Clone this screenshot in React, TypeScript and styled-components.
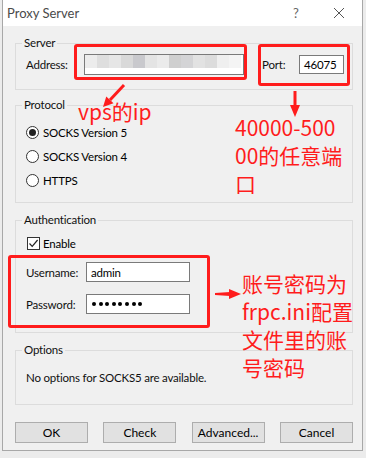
import React from 'react';
import styled, { createGlobalStyle } from 'styled-components';

const uiFont = 'Lato, "Noto Sans", Arial, sans-serif';
const red = '#ff1c1c';

const GlobalStyle = createGlobalStyle`
  html, body {
    margin: 0;
    padding: 0;
  }
  body {
    background: #e9e9e9;
    font-family: ${uiFont};
    font-size: 11.5px;
    letter-spacing: -0.2px;
    color: #000;
  }
`;

const Page = styled.div`
  position: relative;
  width: 366px;
  height: 458px;
  overflow: hidden;
  padding-left: 2px;
  box-sizing: border-box;
  background: #ececec;
`;

const Window = styled.div`
  width: 361px;
  height: 451px;
  box-sizing: border-box;
  border: 1px solid #a8a8a8;
  border-top: none;
  background: #f0f0f0;
  display: flex;
  flex-direction: column;
`;

const TitleBar = styled.div`
  height: 26px;
  flex-shrink: 0;
  background: #fff;
  display: flex;
  align-items: center;
  padding-left: 4px;
  color: #4a4a4a;
  font-size: 13px;
  letter-spacing: 0;
`;

const Title = styled.span`
  flex: 1;
`;

const HelpGlyph = styled.span`
  width: 14px;
  margin-right: 30px;
  color: #666;
  font-size: 13px;
  text-align: center;
`;

const CloseIcon = styled.svg`
  width: 12px;
  height: 12px;
  margin-right: 17px;
`;

const Body = styled.div`
  flex: 1;
  padding: 9px 9px 0 12px;
  display: flex;
  flex-direction: column;
`;

const Group = styled.fieldset<{ $top: number; $bottom: number; $gap?: number }>`
  margin: 0 0 ${({ $gap }) => $gap ?? 0}px;
  padding: ${({ $top }) => $top}px 0 ${({ $bottom }) => $bottom}px 10px;
  border: 1px solid #dcdcdc;
  min-width: 0;
`;

const Legend = styled.legend`
  padding: 0 2px;
  margin-left: -4px;
  line-height: 16px;
  color: #111;
`;

const Row = styled.div<{ $mt?: number }>`
  display: flex;
  align-items: center;
  margin-top: ${({ $mt }) => $mt ?? 0}px;
`;

const Label = styled.span<{ $w: number; $ml?: number }>`
  width: ${({ $w }) => $w}px;
  margin-left: ${({ $ml }) => $ml ?? 0}px;
  flex-shrink: 0;
  color: #111;
`;

const TextBox = styled.div<{ $w: number; $h: number }>`
  width: ${({ $w }) => $w}px;
  height: ${({ $h }) => $h}px;
  box-sizing: border-box;
  border: 1px solid #7a7a7a;
  background: #fff;
  display: flex;
  align-items: center;
  padding-left: 4px;
  overflow: hidden;
`;

const Mosaic = styled.div`
  display: flex;
  align-self: stretch;
  margin: 0 0 6px -4px;
`;

const Cell = styled.span<{ $c: string }>`
  width: 12px;
  background: ${({ $c }) => $c};
`;

const RadioRow = styled.label`
  display: flex;
  align-items: center;
  height: 18px;
  & + & {
    margin-top: 6px;
  }
`;

const Radio = styled.span<{ $on?: boolean }>`
  width: 11px;
  height: 11px;
  border: 1px solid #333;
  border-radius: 50%;
  background: #fff;
  margin-right: 4px;
  display: flex;
  align-items: center;
  justify-content: center;
  &::after {
    content: '';
    display: ${({ $on }) => ($on ? 'block' : 'none')};
    width: 7px;
    height: 7px;
    border-radius: 50%;
    background: #222;
  }
`;

const CheckBox = styled.span`
  width: 11px;
  height: 11px;
  border: 1px solid #333;
  background: #fff;
  margin: 0 3px 0 1px;
  display: flex;
`;

const Dots = styled.div`
  display: flex;
  gap: 2.6px;
  padding-left: 1px;
`;

const Dot = styled.span`
  width: 4px;
  height: 4px;
  border-radius: 50%;
  background: #000;
`;

const Note = styled.div`
  line-height: 16px;
  color: #111;
`;

const Buttons = styled.div`
  display: flex;
  justify-content: space-between;
  margin-top: 17px;
`;

const Button = styled.button`
  width: 73px;
  height: 21px;
  box-sizing: border-box;
  border: 1px solid #adadad;
  background: #e1e1e1;
  font-family: ${uiFont};
  font-size: 12px;
  color: #000;
  padding: 0;
`;

const RedBox = styled.div<{ $x: number; $y: number; $w: number; $h: number }>`
  position: absolute;
  left: ${({ $x }) => $x}px;
  top: ${({ $y }) => $y}px;
  width: ${({ $w }) => $w}px;
  height: ${({ $h }) => $h}px;
  box-sizing: border-box;
  border: 3px solid ${red};
  border-radius: 3px;
  pointer-events: none;
`;

const RedNote = styled.div<{ $x: number; $y: number; $lh?: number }>`
  position: absolute;
  left: ${({ $x }) => $x}px;
  top: ${({ $y }) => $y}px;
  font-family: "Noto Sans CJK SC", "Noto Sans", sans-serif;
  font-size: 21px;
  letter-spacing: 0;
  line-height: ${({ $lh }) => $lh ?? 28}px;
  color: ${red};
  white-space: nowrap;
`;

const ArrowLayer = styled.svg`
  position: absolute;
  left: 0;
  top: 0;
  pointer-events: none;
`;

const mosaic = ['#ececec', '#dedede', '#e6e6e6', '#d9d9d9', '#c9c9cd', '#e4e4e4', '#ebebeb', '#cfcfcf', '#d4d4d6', '#e2e2e2', '#dcdcdc', '#efefef', '#f4f4f4'];

export default function App() {
  return (
    <>
      <GlobalStyle />
      <Page>
        <Window>
          <TitleBar>
            <Title>Proxy Server</Title>
            <HelpGlyph>?</HelpGlyph>
            <CloseIcon viewBox="0 0 12 12">
              <path d="M1 1 L11 11 M11 1 L1 11" stroke="#555" strokeWidth="1" />
            </CloseIcon>
          </TitleBar>
          <Body>
            <Group $top={3} $bottom={14} $gap={7}>
              <Legend>Server</Legend>
              <Row>
                <Label $w={58}>Address:</Label>
                <TextBox $w={160} $h={21}>
                  <Mosaic>
                    {mosaic.map((c, i) => (
                      <Cell key={i} $c={c} />
                    ))}
                  </Mosaic>
                </TextBox>
                <Label $w={37} $ml={18}>Port:</Label>
                <TextBox $w={45} $h={19}>46075</TextBox>
              </Row>
            </Group>

            <Group $top={10} $bottom={13} $gap={9}>
              <Legend>Protocol</Legend>
              <RadioRow>
                <Radio $on />
                SOCKS Version 5
              </RadioRow>
              <RadioRow>
                <Radio />
                SOCKS Version 4
              </RadioRow>
              <RadioRow>
                <Radio />
                HTTPS
              </RadioRow>
            </Group>

            <Group $top={6} $bottom={18} $gap={9}>
              <Legend>Authentication</Legend>
              <RadioRow>
                <CheckBox>
                  <svg width="11" height="11" viewBox="0 0 11 11">
                    <path d="M1.5 5.5 L4.2 8.3 L9.6 2" fill="none" stroke="#222" strokeWidth="1.2" />
                  </svg>
                </CheckBox>
                Enable
              </RadioRow>
              <Row $mt={10}>
                <Label $w={60}>Username:</Label>
                <TextBox $w={104} $h={20}>admin</TextBox>
              </Row>
              <Row $mt={12}>
                <Label $w={60}>Password:</Label>
                <TextBox $w={104} $h={20}>
                  <Dots>
                    {Array.from({ length: 8 }).map((_, i) => (
                      <Dot key={i} />
                    ))}
                  </Dots>
                </TextBox>
              </Row>
            </Group>

            <Group $top={12} $bottom={18}>
              <Legend>Options</Legend>
              <Note>No options for SOCKS5 are available.</Note>
            </Group>

            <Buttons>
              <Button>OK</Button>
              <Button>Check</Button>
              <Button>Advanced...</Button>
              <Button>Cancel</Button>
            </Buttons>
          </Body>
        </Window>

        <RedBox $x={74} $y={44} $w={173} $h={36} />
        <RedBox $x={258} $y={44} $w={92} $h={42} />
        <RedBox $x={8} $y={255} $w={202} $h={73} />

        <RedNote $x={78} $y={102} $lh={19}>vps的ip</RedNote>
        <RedNote $x={235} $y={113}>
          40000-500
          <br />
          00的任意端
          <br />
          口
        </RedNote>
        <RedNote $x={242} $y={269}>
          账号密码为
          <br />
          frpc.ini配置
          <br />
          文件里的账
          <br />
          号密码
        </RedNote>

        <ArrowLayer width="366" height="458" viewBox="0 0 366 458">
          <path d="M124 85 L110 100" stroke={red} strokeWidth="3" />
          <polygon points="103,107 113.5,103.3 106.3,96.4" fill={red} />
          <path d="M295 91 L295 106" stroke={red} strokeWidth="3" />
          <polygon points="290,105 300,105 295,117" fill={red} />
          <polygon points="215,293 230,292 230,296 215,295" fill={red} />
          <polygon points="229,289 229,299 241,294" fill={red} />
        </ArrowLayer>
      </Page>
    </>
  );
}
